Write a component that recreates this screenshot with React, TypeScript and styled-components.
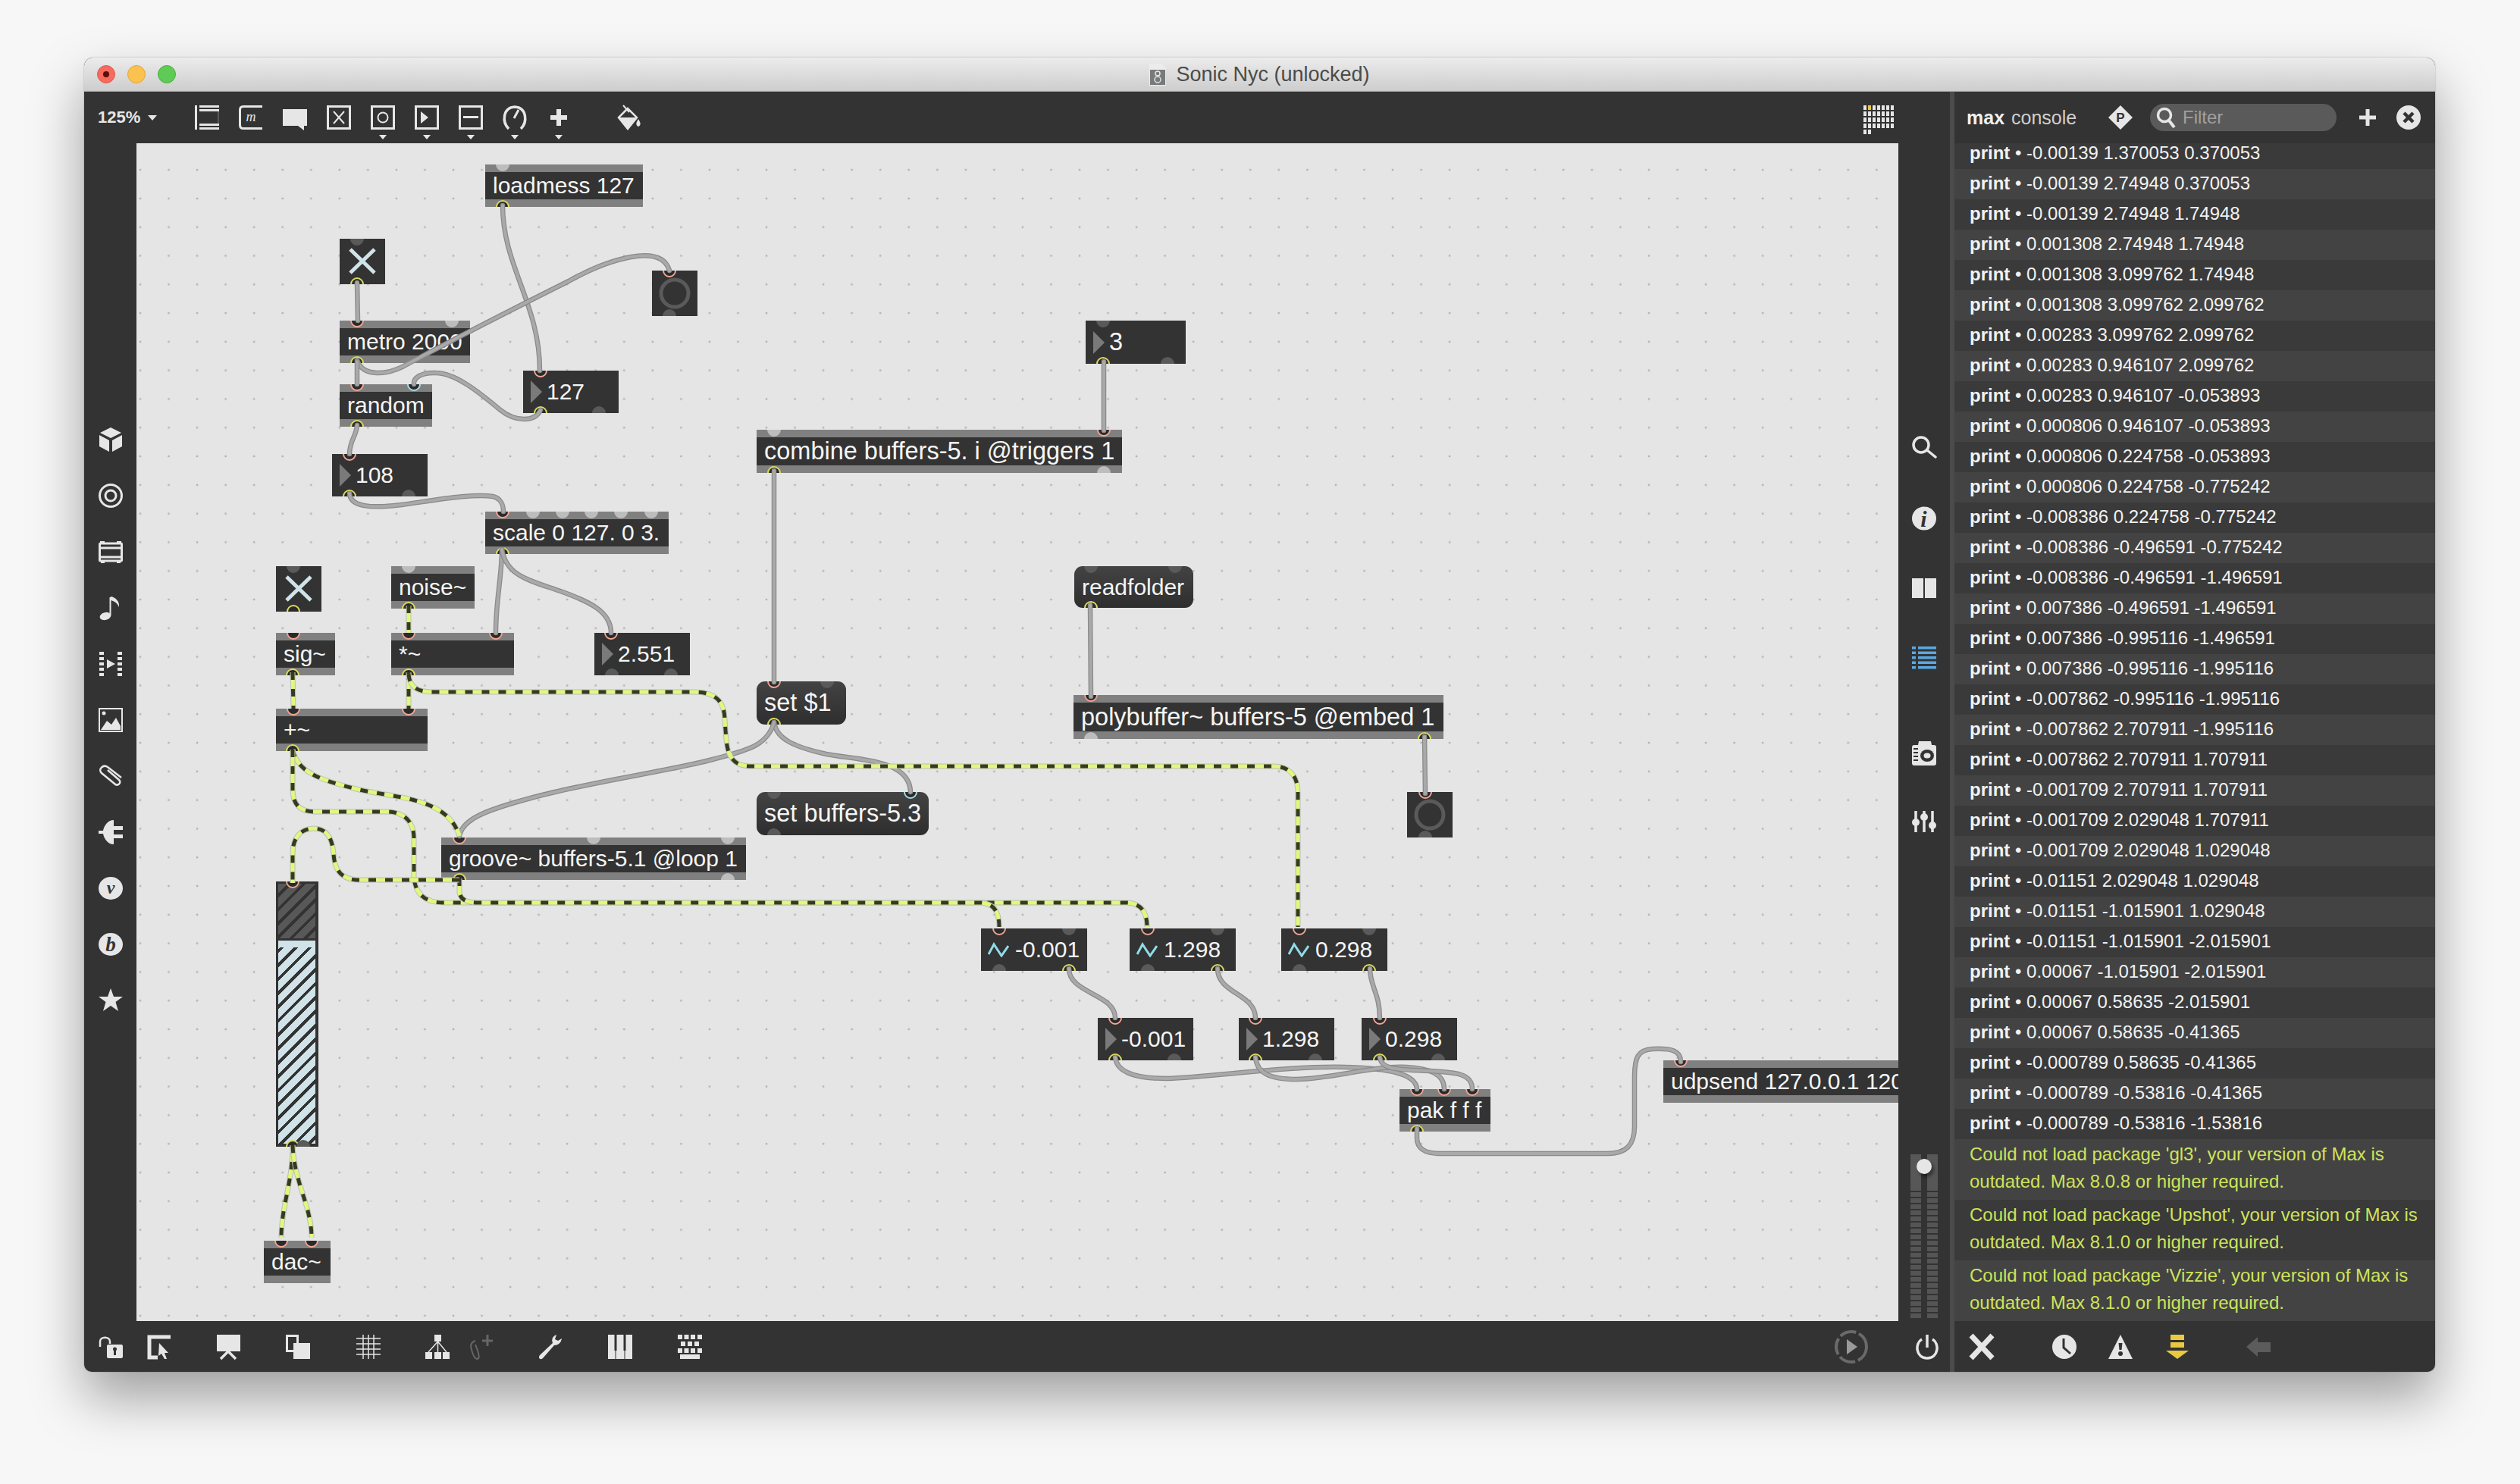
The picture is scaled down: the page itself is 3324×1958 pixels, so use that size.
import React from "react"
import styled, { createGlobalStyle } from "styled-components"

const CX = 180
const CY = 188
const CW = 2324
const CH = 1554

const GlobalStyle = createGlobalStyle`
  html, body {
    margin: 0;
    padding: 0;
    background: #f7f7f7;
    font-family: "Liberation Sans", Arial, sans-serif;
  }
`

const Page = styled.div`
  width: 3324px;
  height: 1958px;
  padding: 76px 0 0 111px;
  box-sizing: border-box;
  overflow: hidden;
`

const Window = styled.div`
  width: 3101px;
  height: 1734px;
  display: flex;
  flex-direction: column;
  border-radius: 12px 12px 10px 10px;
  overflow: hidden;
  background: #333;
  box-shadow: 0 34px 70px rgba(0, 0, 0, 0.36), 0 0 2px rgba(0, 0, 0, 0.3);
`

const TitleBar = styled.div`
  height: 45px;
  flex: none;
  box-sizing: border-box;
  display: grid;
  grid-template-columns: 1fr auto 1fr;
  align-items: center;
  background: linear-gradient(#ececec, #cdcdcd);
  border-bottom: 1px solid #a8a8a8;
`

const Lights = styled.div`
  display: flex;
  gap: 16px;
  padding-left: 17px;
`

const Light = styled.div<{ $color: string; $edge: string }>`
  width: 24px;
  height: 24px;
  border-radius: 50%;
  background: ${(p) => p.$color};
  border: 1px solid ${(p) => p.$edge};
  box-sizing: border-box;
  display: flex;
  align-items: center;
  justify-content: center;
`

const LightDot = styled.div`
  width: 8px;
  height: 8px;
  border-radius: 50%;
  background: #5c0f0a;
`

const Title = styled.div`
  display: flex;
  align-items: center;
  gap: 13px;
  font-size: 27px;
  color: #4b4b4b;
`

const Body = styled.div`
  flex: 1;
  display: flex;
  min-height: 0;
`

const Main = styled.div`
  width: 2461px;
  flex: none;
  display: flex;
  flex-direction: column;
`

const Toolbar = styled.div`
  height: 68px;
  flex: none;
  box-sizing: border-box;
  padding: 18px 74px 0 18px;
  display: flex;
  align-items: flex-start;
  gap: 26px;
`

const ZoomLabel = styled.div`
  width: 102px;
  height: 32px;
  display: flex;
  align-items: center;
  gap: 10px;
  font-size: 22px;
  font-weight: bold;
  color: #e6e6e6;
`

const Caret = styled.div<{ $w?: number }>`
  width: 0;
  height: 0;
  border-left: ${(p) => p.$w ?? 6}px solid transparent;
  border-right: ${(p) => p.$w ?? 6}px solid transparent;
  border-top: ${(p) => (p.$w ?? 6) + 1}px solid #e6e6e6;
`

const Tool = styled.div<{ $ml?: number }>`
  width: 32px;
  display: flex;
  flex-direction: column;
  align-items: center;
  gap: 7px;
  margin-left: ${(p) => p.$ml ?? 0}px;
`

const MatrixIcon = styled.svg`
  width: 40px;
  height: 38px;
  margin-left: auto;
  display: block;
`

const Middle = styled.div`
  flex: 1;
  display: flex;
  min-height: 0;
`

const LeftBar = styled.div`
  width: 69px;
  flex: none;
  box-sizing: border-box;
  padding-top: 375px;
  display: flex;
  flex-direction: column;
  align-items: center;
  gap: 42px;
`

const Canvas = styled.div`
  position: relative;
  width: ${CW}px;
  height: ${CH}px;
  flex: none;
  overflow: hidden;
  background-color: #e5e5e5;
  background-image: radial-gradient(circle, #b4b4b4 1.2px, transparent 1.7px);
  background-size: 37.55px 37.8px;
  background-position: -13.8px 16.2px;
`

const RightBar = styled.div`
  width: 68px;
  flex: none;
  box-sizing: border-box;
  padding: 386px 0 4px;
  display: flex;
  flex-direction: column;
  align-items: center;
`

const RightIcon = styled.div<{ $mt: number }>`
  margin-top: ${(p) => p.$mt}px;
  height: 32px;
`

const Meter = styled.div`
  position: relative;
  margin-top: auto;
  width: 36px;
  height: 216px;
  display: flex;
  justify-content: space-between;
`

const MeterCol = styled.div`
  width: 14px;
  display: flex;
  flex-direction: column;
  gap: 2px;
`

const MeterTop = styled.div`
  height: 48px;
  background: #575757;
`

const MeterSegs = styled.div`
  flex: 1;
  background: repeating-linear-gradient(#555 0 6px, transparent 6px 8px);
`

const Knob = styled.div`
  position: absolute;
  left: 8px;
  top: 6px;
  width: 20px;
  height: 20px;
  border-radius: 50%;
  background: #e6e6e6;
  box-shadow: 3px 4px 4px rgba(0, 0, 0, 0.4);
`

const BottomBar = styled.div`
  height: 67px;
  flex: none;
  box-sizing: border-box;
  padding: 18px 14px 0 19px;
  display: flex;
  align-items: flex-start;
`

const BarItem = styled.div<{ $ml: number; $auto?: boolean }>`
  height: 32px;
  margin-left: ${(p) => (p.$auto ? "auto" : `${p.$ml}px`)};
`

const RecordIcon = styled.svg`
  width: 48px;
  height: 48px;
  margin-top: -8px;
  display: block;
`

const Divider = styled.div`
  width: 6px;
  flex: none;
  background: #4b4b4b;
`

const Console = styled.div`
  flex: 1;
  display: flex;
  flex-direction: column;
  min-width: 0;
`

const ConsoleHead = styled.div`
  height: 68px;
  flex: none;
  box-sizing: border-box;
  padding-left: 16px;
  display: flex;
  align-items: center;
`

const ConsoleName = styled.div`
  width: 187px;
  font-size: 25px;
  color: #cfcfcf;

  b {
    color: #f0f0f0;
    margin-right: 9px;
  }
`

const FilterBox = styled.div`
  width: 246px;
  height: 36px;
  margin-left: 23px;
  box-sizing: border-box;
  padding-left: 8px;
  display: flex;
  align-items: center;
  gap: 9px;
  border-radius: 18px;
  background: #5a5a5a;
  font-size: 24px;
  color: #a0a0a0;
`

const HeadIcon = styled.div<{ $ml: number }>`
  height: 32px;
  margin-left: ${(p) => p.$ml}px;
`

const LogList = styled.div`
  flex: 1;
  min-height: 0;
  overflow: hidden;
  display: flex;
  flex-direction: column;
  justify-content: flex-end;
`

const LogRow = styled.div<{ $light: boolean }>`
  height: 40px;
  flex: none;
  box-sizing: border-box;
  padding-left: 20px;
  line-height: 38px;
  font-size: 24px;
  white-space: nowrap;
  color: #f2f2f2;
  background: ${(p) => (p.$light ? "#434343" : "#3a3a3a")};
`

const WarnRow = styled.div<{ $light: boolean }>`
  height: 80px;
  flex: none;
  box-sizing: border-box;
  padding: 2px 0 0 20px;
  line-height: 36px;
  font-size: 24px;
  white-space: nowrap;
  color: #cee35a;
  background: ${(p) => (p.$light ? "#434343" : "#3a3a3a")};
`

const ConsoleFoot = styled.div`
  height: 67px;
  flex: none;
  box-sizing: border-box;
  padding: 18px 0 0 20px;
  display: flex;
  align-items: flex-start;
`

const FootIcon = styled.div<{ $ml: number }>`
  height: 32px;
  margin-left: ${(p) => p.$ml}px;
`

const Ico = styled.svg<{ $color?: string }>`
  width: 32px;
  height: 32px;
  display: block;
  flex: none;
  overflow: visible;
  color: ${(p) => p.$color ?? "#e6e6e6"};
`

/* patcher objects, free canvas so they sit at their coordinates */
const Node = styled.div<{ $x: number; $y: number; $w: number; $h: number; $size?: number }>`
  position: absolute;
  left: ${(p) => p.$x - CX}px;
  top: ${(p) => p.$y - CY}px;
  width: ${(p) => p.$w}px;
  height: ${(p) => p.$h}px;
  box-sizing: border-box;
  overflow: hidden;
  display: flex;
  align-items: center;
  font-size: ${(p) => p.$size ?? 30}px;
  color: #f5f5f5;
  white-space: nowrap;
  background: #333;
`

const ObjectBox = styled(Node)`
  padding-left: 10px;
  background: linear-gradient(#808080 10px, #333 10px, #333 calc(100% - 10px), #808080 calc(100% - 10px));
`

const MessageBox = styled(Node)`
  padding-left: 10px;
  border-radius: 11px;
  background: linear-gradient(#434343, #2e2e2e);
`

const NumberBox = styled(Node)`
  padding-left: 10px;
  gap: 6px;
`

const SigNumberBox = styled(Node)`
  padding-left: 9px;
  gap: 8px;
`

const GainBox = styled(Node)`
  display: block;
  padding: 3px 4px 4px 3px;
`

const GainFill = styled.div`
  height: 100%;
  background: repeating-linear-gradient(135deg, #cfe3e8 0 9px, #333 9px 13px);
`

const GainTop = styled.div`
  height: 72px;
  background: repeating-linear-gradient(135deg, #585858 0 9px, #333 9px 13px);
  border-bottom: 3px solid #333;
`

const GainCap = styled.div`
  height: 9px;
  background: #cfe3e8;
`

const Triangle = styled.div`
  width: 0;
  height: 0;
  flex: none;
  border-top: 15px solid transparent;
  border-bottom: 15px solid transparent;
  border-left: 15px solid #7a7a7a;
`

const Port = styled.div<{ $at: number; $side: string; $state: string; $band: boolean }>`
  position: absolute;
  left: ${(p) => p.$at - 9}px;
  ${(p) => (p.$side === "t" ? "top" : "bottom")}: -9px;
  width: 18px;
  height: 18px;
  box-sizing: border-box;
  border-radius: 50%;
  border: 2px solid
    ${(p) =>
      p.$state === "hot"
        ? "#f2a592"
        : p.$state === "cold"
          ? "#a4dcea"
          : p.$state === "out"
            ? "#dada62"
            : p.$band
              ? "#bdbdbd"
              : "#5a5a5a"};
  background: ${(p) => (p.$state === "idle" ? (p.$band ? "#bdbdbd" : "#5a5a5a") : "#2a2a2a")};
`

const Overlay = styled.svg`
  position: absolute;
  left: 0;
  top: 0;
  width: ${CW}px;
  height: ${CH}px;
  pointer-events: none;
`

type PortSpec = [number, "t" | "b", "hot" | "cold" | "out" | "idle"]

interface NodeSpec {
  kind: "obj" | "msg" | "num" | "sig" | "toggle" | "bang" | "gain"
  x: number
  y: number
  w: number
  h: number
  label?: string
  size?: number
  ports: PortSpec[]
}

const nodes: NodeSpec[] = [
  { kind: "obj", x: 640, y: 216, w: 208, h: 56, label: "loadmess 127", ports: [[23, "t", "idle"], [23, "b", "out"]] },
  { kind: "toggle", x: 448, y: 314, w: 60, h: 60, ports: [[23, "t", "idle"], [23, "b", "out"]] },
  { kind: "bang", x: 860, y: 356, w: 60, h: 60, ports: [[23, "t", "hot"], [23, "b", "idle"]] },
  { kind: "obj", x: 448, y: 422, w: 172, h: 56, label: "metro 2000", ports: [[23, "t", "hot"], [148, "t", "idle"], [23, "b", "out"]] },
  { kind: "obj", x: 448, y: 506, w: 122, h: 56, label: "random", ports: [[23, "t", "hot"], [98, "t", "cold"], [23, "b", "out"]] },
  { kind: "num", x: 690, y: 488, w: 126, h: 56, label: "127", ports: [[23, "t", "hot"], [23, "b", "out"], [100, "b", "idle"]] },
  { kind: "num", x: 438, y: 598, w: 126, h: 56, label: "108", ports: [[23, "t", "hot"], [23, "b", "out"], [101, "b", "idle"]] },
  { kind: "obj", x: 640, y: 674, w: 242, h: 56, label: "scale 0 127. 0 3.", ports: [[23, "t", "hot"], [63, "t", "idle"], [102, "t", "idle"], [140, "t", "idle"], [179, "t", "idle"], [219, "t", "idle"], [23, "b", "out"]] },
  { kind: "num", x: 1432, y: 422, w: 132, h: 57, label: "3", size: 32.5, ports: [[23, "t", "idle"], [23, "b", "out"], [108, "b", "idle"]] },
  { kind: "obj", x: 998, y: 566, w: 482, h: 57, label: "combine buffers-5. i @triggers 1", size: 32.5, ports: [[23, "t", "idle"], [458, "t", "hot"], [23, "b", "out"], [458, "b", "idle"]] },
  { kind: "msg", x: 1417, y: 746, w: 157, h: 55, label: "readfolder", ports: [[22, "t", "idle"], [133, "t", "idle"], [22, "b", "out"]] },
  { kind: "msg", x: 998, y: 898, w: 118, h: 57, label: "set $1", size: 32.5, ports: [[23, "t", "hot"], [93, "t", "idle"], [23, "b", "out"]] },
  { kind: "obj", x: 1416, y: 916, w: 488, h: 58, label: "polybuffer~ buffers-5 @embed 1", size: 32.5, ports: [[23, "t", "hot"], [23, "b", "idle"], [463, "b", "out"]] },
  { kind: "msg", x: 998, y: 1044, w: 227, h: 57, label: "set buffers-5.3", size: 32.5, ports: [[23, "t", "idle"], [203, "t", "cold"], [23, "b", "idle"]] },
  { kind: "bang", x: 1856, y: 1044, w: 60, h: 60, ports: [[24, "t", "hot"], [24, "b", "idle"]] },
  { kind: "toggle", x: 364, y: 746, w: 60, h: 60, ports: [[23, "t", "idle"], [23, "b", "out"]] },
  { kind: "obj", x: 516, y: 746, w: 110, h: 56, label: "noise~", ports: [[23, "t", "idle"], [23, "b", "out"]] },
  { kind: "obj", x: 364, y: 834, w: 78, h: 56, label: "sig~", ports: [[23, "t", "hot"], [22, "b", "out"]] },
  { kind: "obj", x: 516, y: 834, w: 162, h: 56, label: "*~", ports: [[23, "t", "hot"], [138, "t", "hot"], [23, "b", "out"]] },
  { kind: "num", x: 784, y: 834, w: 126, h: 56, label: "2.551", ports: [[22, "t", "hot"], [23, "b", "idle"], [101, "b", "idle"]] },
  { kind: "obj", x: 364, y: 934, w: 200, h: 56, label: "+~", ports: [[23, "t", "hot"], [175, "t", "hot"], [22, "b", "out"]] },
  { kind: "obj", x: 582, y: 1104, w: 402, h: 56, label: "groove~ buffers-5.1 @loop 1", ports: [[24, "t", "hot"], [201, "t", "idle"], [378, "t", "idle"], [24, "b", "out"], [378, "b", "idle"]] },
  { kind: "gain", x: 364, y: 1162, w: 56, h: 350, ports: [[22, "t", "hot"], [22, "b", "out"], [36, "b", "idle"]] },
  { kind: "obj", x: 348, y: 1636, w: 88, h: 56, label: "dac~", ports: [[23, "t", "hot"], [63, "t", "hot"]] },
  { kind: "sig", x: 1294, y: 1224, w: 140, h: 56, label: "-0.001", ports: [[24, "t", "hot"], [116, "t", "idle"], [24, "b", "idle"], [116, "b", "out"]] },
  { kind: "sig", x: 1490, y: 1224, w: 140, h: 56, label: "1.298", ports: [[24, "t", "hot"], [116, "t", "idle"], [24, "b", "idle"], [116, "b", "out"]] },
  { kind: "sig", x: 1690, y: 1224, w: 140, h: 56, label: "0.298", ports: [[24, "t", "hot"], [116, "t", "idle"], [24, "b", "idle"], [116, "b", "out"]] },
  { kind: "num", x: 1448, y: 1342, w: 126, h: 56, label: "-0.001", ports: [[23, "t", "hot"], [23, "b", "out"], [101, "b", "idle"]] },
  { kind: "num", x: 1634, y: 1342, w: 126, h: 56, label: "1.298", ports: [[22, "t", "hot"], [22, "b", "out"], [101, "b", "idle"]] },
  { kind: "num", x: 1796, y: 1342, w: 126, h: 56, label: "0.298", ports: [[24, "t", "hot"], [24, "b", "out"], [101, "b", "idle"]] },
  { kind: "obj", x: 1846, y: 1436, w: 120, h: 56, label: "pak f f f", ports: [[23, "t", "hot"], [59, "t", "hot"], [96, "t", "hot"], [23, "b", "out"]] },
  { kind: "obj", x: 2194, y: 1398, w: 400, h: 56, label: "udpsend 127.0.0.1 12000", ports: [[23, "t", "hot"]] },
]

const grayWires = [
  "M471 372 L472 422",
  "M663 270 C663 350 712 400 712 488",
  "M471 474 C478 496 510 496 540 478 C600 446 690 400 750 370 C800 342 872 318 883 356",
  "M471 476 L471 506",
  "M713 540 C706 556 680 556 660 540 C630 515 600 491 575 491 C555 490 545 498 546 506",
  "M471 560 C470 575 461 580 461 598",
  "M461 650 C462 668 490 670 530 665 C580 658 625 650 650 654 C660 656 664 665 664 674",
  "M662 724 C662 760 654 790 654 834",
  "M662 724 C668 760 700 765 742 780 C775 792 806 805 806 834",
  "M1456 476 L1456 567",
  "M1021 620 L1021 899",
  "M1438 797 L1439 918",
  "M1879 971 L1880 1046",
  "M1021 952 C1024 975 1050 985 1090 994 C1130 1002 1200 1000 1201 1044",
  "M1021 952 C1012 985 980 990 940 1001 C880 1017 780 1030 700 1052 C640 1068 610 1080 606 1102",
  "M1410 1277 C1410 1310 1471 1310 1471 1342",
  "M1606 1277 C1606 1310 1656 1310 1656 1342",
  "M1807 1277 C1807 1300 1820 1310 1820 1342",
  "M1471 1394 C1473 1415 1500 1422 1540 1422 C1600 1420 1700 1405 1775 1407 C1830 1409 1868 1415 1869 1436",
  "M1656 1394 C1658 1415 1675 1423 1710 1423 C1760 1422 1810 1405 1855 1407 C1885 1409 1905 1415 1905 1436",
  "M1820 1394 C1822 1412 1850 1410 1885 1412 C1920 1414 1942 1415 1942 1436",
  "M1869 1488 L1869 1500 C1869 1515 1880 1521 1900 1521 L2120 1521 C2145 1521 2156 1510 2156 1485 L2156 1420 C2156 1395 2160 1384 2180 1383 C2205 1382 2217 1385 2217 1400",
]

const signalWires = [
  "M539 798 L539 834",
  "M386 886 L387 934",
  "M539 886 L539 934",
  "M539 888 C540 905 550 912 570 912 L915 912 C945 912 956 925 956 950 L958 975 C960 1000 970 1010 990 1010 L1680 1010 C1700 1010 1712 1022 1712 1045 L1712 1222",
  "M386 988 C392 1020 430 1030 470 1040 C520 1052 590 1050 606 1102",
  "M386 988 L386 1040 C386 1060 395 1070 415 1070 L510 1070 C535 1070 546 1085 546 1105 L546 1157 C548 1178 560 1190 585 1190 L1485 1190 C1503 1190 1513 1200 1513 1222",
  "M606 1158 L606 1177 C608 1186 615 1190 630 1190 L1295 1190 C1310 1192 1318 1200 1318 1222",
  "M606 1160 L470 1160 C448 1158 441 1145 440 1125 C438 1103 430 1092 414 1092 C396 1092 386 1105 386 1125 L386 1164",
  "M386 1510 C386 1560 371 1590 371 1632",
  "M386 1510 C388 1560 411 1590 411 1632",
]

const print = [
  "-0.00139 1.370053 0.370053",
  "-0.00139 2.74948 0.370053",
  "-0.00139 2.74948 1.74948",
  "0.001308 2.74948 1.74948",
  "0.001308 3.099762 1.74948",
  "0.001308 3.099762 2.099762",
  "0.00283 3.099762 2.099762",
  "0.00283 0.946107 2.099762",
  "0.00283 0.946107 -0.053893",
  "0.000806 0.946107 -0.053893",
  "0.000806 0.224758 -0.053893",
  "0.000806 0.224758 -0.775242",
  "-0.008386 0.224758 -0.775242",
  "-0.008386 -0.496591 -0.775242",
  "-0.008386 -0.496591 -1.496591",
  "0.007386 -0.496591 -1.496591",
  "0.007386 -0.995116 -1.496591",
  "0.007386 -0.995116 -1.995116",
  "-0.007862 -0.995116 -1.995116",
  "-0.007862 2.707911 -1.995116",
  "-0.007862 2.707911 1.707911",
  "-0.001709 2.707911 1.707911",
  "-0.001709 2.029048 1.707911",
  "-0.001709 2.029048 1.029048",
  "-0.01151 2.029048 1.029048",
  "-0.01151 -1.015901 1.029048",
  "-0.01151 -1.015901 -2.015901",
  "0.00067 -1.015901 -2.015901",
  "0.00067 0.58635 -2.015901",
  "0.00067 0.58635 -0.41365",
  "-0.000789 0.58635 -0.41365",
  "-0.000789 -0.53816 -0.41365",
  "-0.000789 -0.53816 -1.53816",
]

const warnings = [
  ["Could not load package 'gl3', your version of Max is", "outdated. Max 8.0.8 or higher required."],
  ["Could not load package 'Upshot', your version of Max is", "outdated. Max 8.1.0 or higher required."],
  ["Could not load package 'Vizzie', your version of Max is", "outdated. Max 8.1.0 or higher required."],
]

const box = { fill: "none", stroke: "currentColor", strokeWidth: 3 }
const line = { stroke: "currentColor", strokeWidth: 3, fill: "none" }

/* toolbar */
const topIcons: React.ReactNode[] = [
  <><rect x="0" y="0" width="3" height="32" fill="currentColor" /><path d="M6 1.5H32M6 6.5H32M6 25.5H32M6 30.5H32" {...line} /><path d="M31 8V24" stroke="#666" strokeWidth="1.5" /></>,
  <><path d="M31 1.5H6Q1.5 1.5 1.5 6V26Q1.5 30.5 6 30.5H31" {...box} /><text x="16" y="21" fontSize="18" fontStyle="italic" fontFamily="Liberation Serif" textAnchor="middle" fill="currentColor">m</text></>,
  <path d="M0 5H32V27H28V33L20 27H0Z" fill="currentColor" />,
  <><rect x="1.5" y="1.5" width="29" height="29" {...box} /><path d="M9 8L23 24M23 8L9 24" {...line} strokeWidth={2} /></>,
  <><rect x="1.5" y="1.5" width="29" height="29" {...box} /><circle cx="16" cy="16" r="6.5" {...line} strokeWidth={2} /></>,
  <><rect x="1.5" y="1.5" width="29" height="29" {...box} /><path d="M8 8L18 16L8 24Z" fill="currentColor" /></>,
  <><rect x="1.5" y="1.5" width="29" height="29" {...box} /><rect x="6" y="14" width="20" height="3" fill="currentColor" /></>,
  <><path d="M8 31C-1 22 0 3 16 2C32 3 33 22 24 31" {...line} strokeWidth={3.5} /><path d="M15 17L21 6" {...line} /></>,
  <path d="M16 5V27M5 16H27" {...line} strokeWidth={6} />,
  <><path d="M15 4L3 16L15 31L27 16Z" {...line} strokeWidth={2.5} /><path d="M3 16H27L15 31Z" fill="currentColor" /><path d="M9 0L17 9" {...line} strokeWidth={2} /><path d="M29 18C32 23 33 26 29 28C25 26 26 23 29 18Z" fill="currentColor" /></>,
]

/* left column */
const leftIcons: React.ReactNode[] = [
  <path d="M16 0L30 7L16 14L2 7ZM1 10L14 17V32L1 25ZM31 10L18 17V32L31 25Z" fill="currentColor" />,
  <><circle cx="16" cy="16" r="14.5" {...box} /><circle cx="16" cy="16" r="7" {...box} /></>,
  <><rect x="1.5" y="5" width="29" height="23" rx="1" {...box} /><path d="M3 11H29" {...line} /><path d="M3 23H29" {...line} /><path d="M2 3H8M24 3H30M3 30H8M24 30H29" {...line} strokeWidth={2} /></>,
  <><ellipse cx="9" cy="27" rx="7.5" ry="5" transform="rotate(-15 9 27)" fill="currentColor" /><path d="M15.5 2V26" {...line} strokeWidth={2} /><path d="M16 1C22 2 28 7 27 15C25 10 21 7 16 6Z" fill="currentColor" /></>,
  <><path d="M1 2H7M1 9H7M1 16H7M1 23H7M1 30H7M25 2H31M25 9H31M25 16H31M25 23H31M25 30H31" {...line} strokeWidth={4} /><path d="M11 10L22 16L11 22Z" fill="currentColor" /></>,
  <><rect x="1" y="1" width="30" height="30" {...box} strokeWidth={2} /><path d="M3 29L11 17L17 22L23 13L29 24V29Z" fill="currentColor" /><circle cx="7" cy="7" r="2.5" fill="currentColor" /></>,
  <path d="M12 8L27 21C31 25 25 30 21 26L4 12C-1 7 6 0 12 4L30 18" {...line} strokeWidth={2.5} />,
  <path d="M0 14H6C7 8 12 0 20 0V8H32V13H20V19H32V24H20V32C12 32 7 24 6 18H0Z" fill="currentColor" />,
  <><ellipse cx="16" cy="16" rx="16" ry="15" fill="currentColor" /><text x="16" y="23" fontSize="24" fontWeight="bold" fontStyle="italic" fontFamily="Liberation Serif" textAnchor="middle" fill="#333">v</text></>,
  <><ellipse cx="16" cy="16" rx="16" ry="15" fill="currentColor" /><text x="16" y="25" fontSize="27" fontWeight="bold" fontStyle="italic" fontFamily="Liberation Serif" textAnchor="middle" fill="#333">b</text></>,
  <path d="M16 0L20 11H32L22.5 18L26 30L16 23L6 30L9.5 18L0 11H12Z" fill="currentColor" />,
]

/* right column */
const rightIcons: [number, React.ReactNode][] = [
  [0, <><circle cx="12" cy="12" r="10" {...box} strokeWidth={3.5} /><path d="M20 19L31 28" {...line} strokeWidth={3.5} strokeLinecap="round" /></>],
  [61, <><ellipse cx="16" cy="16" rx="16" ry="15.5" fill="currentColor" /><text x="15.5" y="27" fontSize="30" fontWeight="bold" fontStyle="italic" fontFamily="Liberation Serif" textAnchor="middle" fill="#333">i</text></>],
  [60, <><rect x="0" y="3" width="15" height="26" fill="currentColor" /><rect x="17" y="3" width="15" height="26" fill="currentColor" /></>],
  [60, <g fill="#59a8e4"><rect x="0" y="1" width="5" height="3.5" /><rect x="8" y="1" width="24" height="3.5" /><rect x="0" y="7.5" width="5" height="3.5" /><rect x="8" y="7.5" width="24" height="3.5" /><rect x="0" y="14" width="5" height="3.5" /><rect x="8" y="14" width="24" height="3.5" /><rect x="0" y="20.5" width="5" height="3.5" /><rect x="8" y="20.5" width="24" height="3.5" /><rect x="0" y="27" width="5" height="3.5" /><rect x="8" y="27" width="24" height="3.5" /></g>],
  [94, <><path d="M9 0H25L26 5H29Q32 5 32 8V29Q32 32 29 32H3Q0 32 0 29V8Q0 5 3 5H8Z" fill="currentColor" /><ellipse cx="20" cy="19" rx="9" ry="8" fill="#333" /><ellipse cx="20" cy="19" rx="4.5" ry="3.5" fill="currentColor" /><path d="M2 10H8M2 15H8M2 20H8M2 25H8" stroke="#333" strokeWidth="2" /></>],
  [60, <><path d="M5 0V28M16 0V28M27 0V28" {...line} strokeWidth={3.5} /><circle cx="5" cy="15" r="5" fill="currentColor" /><circle cx="16" cy="8" r="5" fill="currentColor" /><circle cx="27" cy="19" r="5" fill="currentColor" /></>],
]

/* bottom row */
const bottomIcons: [number, string, React.ReactNode][] = [
  [0, "#e6e6e6", <><path d="M2 16V9C2 2 15 2 15 9V12" {...line} strokeWidth={2.5} /><rect x="11" y="13" width="21" height="18" rx="2" fill="currentColor" /><path d="M21.5 19V27" stroke="#333" strokeWidth="3" /><circle cx="21.5" cy="19" r="2.5" fill="#333" /></>],
  [31, "#e6e6e6", <><path d="M32 3H4V30H15" {...box} strokeWidth={5} /><path d="M17 11L29 24L24 24L27 32L24 32L20 25L16 28Z" fill="currentColor" /></>],
  [60, "#e6e6e6", <><rect x="1" y="0" width="31" height="22" fill="currentColor" /><path d="M16 22L6 32M16 22L26 32" {...line} strokeWidth={3.5} /></>],
  [60, "#e6e6e6", <><rect x="1.5" y="1.5" width="14" height="20" {...box} strokeWidth={3} /><rect x="10" y="11" width="22" height="21" fill="currentColor" /></>],
  [61, "#e6e6e6", <path d="M9 0V32M16 0V32M23 0V32M0 5H32M0 12H32M0 19H32M0 26H32" {...line} strokeWidth={1.5} />],
  [59, "#e6e6e6", <><rect x="12" y="0" width="9" height="9" fill="currentColor" /><path d="M16.5 9V23M16.5 9L4 23M16.5 9L28 23" {...line} strokeWidth={1.5} /><rect x="0" y="23" width="9" height="9" fill="currentColor" /><rect x="12" y="23" width="9" height="9" fill="currentColor" /><rect x="23" y="23" width="9" height="9" fill="currentColor" /></>],
  [25, "#666", <><path d="M9 8C3 10 2 14 4 20C6 27 8 32 11 32C15 32 14 27 12 21L9 13" {...line} strokeWidth={2} /><path d="M25 0V15M18 8H32" {...line} /></>],
  [60, "#e6e6e6", <path d="M24 0C19 2 17 6 19 11L2 27C-1 31 3 34 6 31L21 14C26 14 30 11 31 5L26 8L22 6Z" fill="currentColor" />],
  [60, "#e6e6e6", <><rect x="0" y="0" width="32" height="32" fill="currentColor" /><rect x="8.5" y="0" width="3" height="21" fill="#333" /><rect x="20.5" y="0" width="3" height="21" fill="#333" /><path d="M10 21V32M22 21V32" stroke="#333" strokeWidth="1" /></>],
  [60, "#e6e6e6", <g fill="currentColor"><rect x="0" y="0" width="6" height="6" /><rect x="8.5" y="0" width="6" height="6" /><rect x="17" y="0" width="6" height="6" /><rect x="26" y="0" width="6" height="6" /><rect x="4" y="9" width="6" height="6" /><rect x="13" y="9" width="6" height="6" /><rect x="22" y="9" width="6" height="6" /><rect x="0" y="18" width="6" height="6" /><rect x="8.5" y="18" width="6" height="6" /><rect x="17" y="18" width="6" height="6" /><rect x="26" y="18" width="6" height="6" /><rect x="3" y="26" width="26" height="6" /></g>],
]

const footIcons: [number, string, React.ReactNode][] = [
  [0, "#e6e6e6", <path d="M2 1L30 31M30 1L2 31" {...line} strokeWidth={7} />],
  [77, "#e6e6e6", <><ellipse cx="16" cy="16" rx="16" ry="16" fill="currentColor" /><path d="M15 5V17L24 25" stroke="#333" strokeWidth="3" fill="none" /></>],
  [42, "#e6e6e6", <><path d="M16 0L32 32H0Z" fill="currentColor" /><path d="M13.5 11H18.5L17.5 20H14.5Z" fill="#333" /><circle cx="16" cy="25" r="3" fill="#333" /></>],
  [43, "#e8c93f", <><rect x="7" y="0" width="18" height="7" fill="currentColor" /><rect x="7" y="10" width="18" height="7" fill="currentColor" /><path d="M1 21H31L16 32Z" fill="currentColor" /></>],
  [75, "#5c5c5c", <path d="M0 16L15 3V10H32V23H15V29Z" fill="currentColor" />],
]

const PatchNode: React.FC<{ spec: NodeSpec }> = ({ spec }) => {
  const { kind, x, y, w, h, label, size, ports } = spec
  const pos = { $x: x, $y: y, $w: w, $h: h, $size: size }
  const dots = ports.map((p, i) => (
    <Port key={i} $at={p[0]} $side={p[1]} $state={p[2]} $band={kind === "obj"} />
  ))

  if (kind === "obj") return <ObjectBox {...pos}>{label}{dots}</ObjectBox>
  if (kind === "msg") return <MessageBox {...pos}>{label}{dots}</MessageBox>
  if (kind === "num") return <NumberBox {...pos}><Triangle />{label}{dots}</NumberBox>
  if (kind === "sig")
    return (
      <SigNumberBox {...pos}>
        <svg width="28" height="20" viewBox="0 0 28 20">
          <path d="M1 16L8 3L18 18L27 5" fill="none" stroke="#8fdde8" strokeWidth="3" />
        </svg>
        {label}
        {dots}
      </SigNumberBox>
    )
  if (kind === "toggle")
    return (
      <Node {...pos}>
        <svg width="60" height="60" viewBox="0 0 60 60">
          <path d="M14 14L46 45M46 14L14 45" stroke="#cfe3e8" strokeWidth="5" fill="none" />
        </svg>
        {dots}
      </Node>
    )
  if (kind === "bang")
    return (
      <Node {...pos}>
        <svg width="60" height="60" viewBox="0 0 60 60">
          <circle cx="30" cy="30" r="18" stroke="#5a5a5a" strokeWidth="5" fill="none" />
        </svg>
        {dots}
      </Node>
    )
  return (
    <GainBox {...pos}>
      <GainFill>
        <GainTop />
        <GainCap />
      </GainFill>
      {dots}
    </GainBox>
  )
}

const App: React.FC = () => {
  const total = print.length + warnings.length
  return (
    <Page>
      <GlobalStyle />
      <Window>
        <TitleBar>
          <Lights>
            <Light $color="#f56b5e" $edge="#dd5a4e"><LightDot /></Light>
            <Light $color="#fbc24f" $edge="#dfa63c" />
            <Light $color="#5fca55" $edge="#4cae44" />
          </Lights>
          <Title>
            <svg width="22" height="29" viewBox="0 0 22 29">
              <path d="M0 0H16L22 6V29H0Z" fill="#ececec" />
              <rect x="1" y="8" width="20" height="20" fill="#7a7a7a" />
              <circle cx="11" cy="21" r="4" fill="none" stroke="#d5e5ea" strokeWidth="1.5" />
              <circle cx="11" cy="13" r="3" fill="none" stroke="#e6e6e6" strokeWidth="1.5" />
            </svg>
            Sonic Nyc (unlocked)
          </Title>
        </TitleBar>
        <Body>
          <Main>
            <Toolbar>
              <ZoomLabel>125% <Caret /></ZoomLabel>
              {topIcons.map((icon, i) => (
                <Tool key={i} $ml={i === 9 ? 34 : 0}>
                  <Ico viewBox="0 0 32 32">{icon}</Ico>
                  {i >= 4 && i <= 8 && <Caret $w={5} />}
                </Tool>
              ))}
              <MatrixIcon viewBox="0 0 40 38">
                {Array.from({ length: 30 }, (_, i) => (
                  <rect key={i} x={(i % 7) * 6} y={Math.floor(i / 7) * 8} width="4" height="6" fill={i === 1 ? "#e8c93f" : "#e6e6e6"} />
                ))}
              </MatrixIcon>
            </Toolbar>
            <Middle>
              <LeftBar>
                {leftIcons.map((icon, i) => (
                  <Ico key={i} viewBox="0 0 32 32">{icon}</Ico>
                ))}
              </LeftBar>
              <Canvas>
                {nodes.map((n, i) => (
                  <PatchNode key={i} spec={n} />
                ))}
                <Overlay viewBox={`${CX} ${CY} ${CW} ${CH}`}>
                  {grayWires.map((d, i) => (
                    <g key={i} fill="none" strokeLinecap="round">
                      <path d={d} stroke="#8a8a8a" strokeWidth="6.5" />
                      <path d={d} stroke="#a9a9a9" strokeWidth="4" />
                    </g>
                  ))}
                  {signalWires.map((d, i) => (
                    <g key={i} fill="none">
                      <path d={d} stroke="#bdbdbd" strokeWidth="7" />
                      <path d={d} stroke="#dff87e" strokeWidth="5" />
                      <path d={d} stroke="#363a22" strokeWidth="5" strokeDasharray="10 12" />
                    </g>
                  ))}
                </Overlay>
              </Canvas>
              <RightBar>
                {rightIcons.map(([mt, icon], i) => (
                  <RightIcon key={i} $mt={mt}>
                    <Ico viewBox="0 0 32 32">{icon}</Ico>
                  </RightIcon>
                ))}
                <Meter>
                  <MeterCol><MeterTop /><MeterSegs /></MeterCol>
                  <MeterCol><MeterTop /><MeterSegs /></MeterCol>
                  <Knob />
                </Meter>
              </RightBar>
            </Middle>
            <BottomBar>
              {bottomIcons.map(([ml, color, icon], i) => (
                <BarItem key={i} $ml={ml}>
                  <Ico viewBox="0 0 32 32" $color={color}>{icon}</Ico>
                </BarItem>
              ))}
              <BarItem $ml={0} $auto>
                <RecordIcon viewBox="0 0 48 48">
                  <circle cx="24" cy="24" r="20" fill="none" stroke="#6a6a6a" strokeWidth="4" strokeDasharray="22 4" />
                  <path d="M18 14L32 24L18 34Z" fill="#9a9a9a" />
                </RecordIcon>
              </BarItem>
              <BarItem $ml={60}>
                <Ico viewBox="0 0 32 32">
                  <path d="M9 6C0 11 0 30 16 31C32 30 32 11 23 6" {...line} strokeWidth={3.5} />
                  <path d="M16 0V17" {...line} strokeWidth={3.5} />
                </Ico>
              </BarItem>
            </BottomBar>
          </Main>
          <Divider />
          <Console>
            <ConsoleHead>
              <ConsoleName><b>max</b>console</ConsoleName>
              <Ico viewBox="0 0 32 32">
                <path d="M16 0L32 16L16 32L0 16Z" fill="currentColor" />
                <text x="16" y="22" fontSize="17" fontWeight="bold" fontFamily="Liberation Sans" textAnchor="middle" fill="#333">P</text>
              </Ico>
              <FilterBox>
                <svg width="26" height="28" viewBox="0 0 26 28">
                  <circle cx="11" cy="11" r="8.5" fill="none" stroke="#e6e6e6" strokeWidth="3.5" />
                  <path d="M17 18L24 27" stroke="#e6e6e6" strokeWidth="4" />
                </svg>
                Filter
              </FilterBox>
              <HeadIcon $ml={25}>
                <Ico viewBox="0 0 32 32"><path d="M16 5V27M5 16H27" {...line} strokeWidth={5} /></Ico>
              </HeadIcon>
              <HeadIcon $ml={22}>
                <Ico viewBox="0 0 32 32">
                  <circle cx="16" cy="16" r="16" fill="currentColor" />
                  <path d="M10 10L22 22M22 10L10 22" stroke="#333" strokeWidth="4.5" />
                </Ico>
              </HeadIcon>
            </ConsoleHead>
            <LogList>
              {print.map((text, i) => (
                <LogRow key={i} $light={(total - i) % 2 !== 0}>
                  <b>print</b> • {text}
                </LogRow>
              ))}
              {warnings.map((w, i) => (
                <WarnRow key={i} $light={i !== 1}>
                  {w[0]}
                  <br />
                  {w[1]}
                </WarnRow>
              ))}
            </LogList>
            <ConsoleFoot>
              {footIcons.map(([ml, color, icon], i) => (
                <FootIcon key={i} $ml={ml}>
                  <Ico viewBox="0 0 32 32" $color={color}>{icon}</Ico>
                </FootIcon>
              ))}
            </ConsoleFoot>
          </Console>
        </Body>
      </Window>
    </Page>
  )
}

export default App
